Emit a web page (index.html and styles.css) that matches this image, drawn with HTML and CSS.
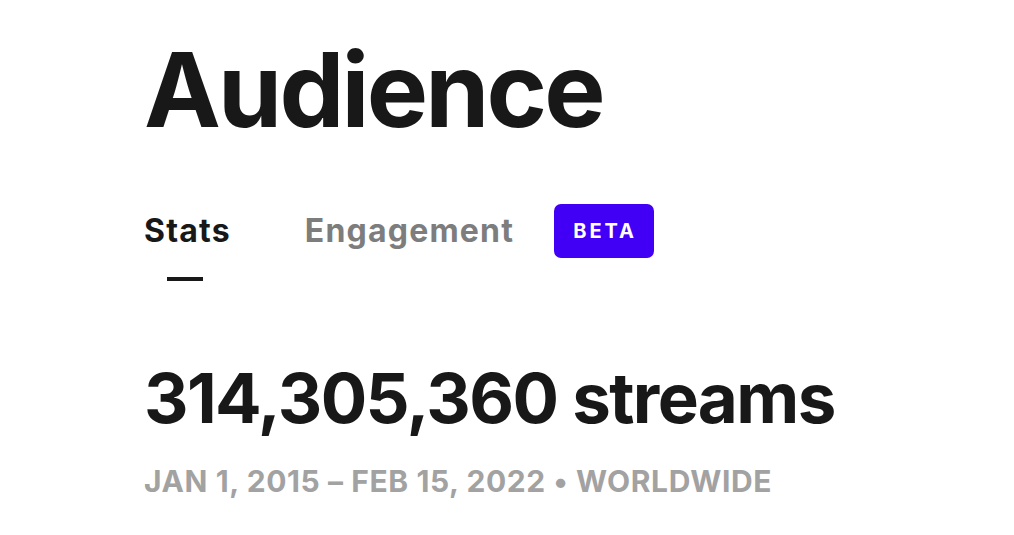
FILE: index.html
```html
<!DOCTYPE html>
<html>
<head>
<meta charset="utf-8">
<link rel="stylesheet" href="styles.css">
</head>
<body>
<main class="page">
  <h1 class="title">Audience</h1>
  <nav class="tabs">
    <div class="tab tab-active">Stats</div>
    <div class="tab">Engagement</div>
    <span class="badge">BETA</span>
  </nav>
  <section class="stats">
    <h2 class="total">314,305,360 streams</h2>
    <p class="meta">JAN 1, 2015 – FEB 15, 2022 • WORLDWIDE</p>
  </section>
</main>
</body>
</html>
```
FILE: styles.css
```css
html, body {
  margin: 0;
  padding: 0;
  background: #ffffff;
}
body {
  font-family: Inter, "Noto Sans", sans-serif;
  color: #181818;
}
.page {
  padding: 30px 0 0 144px;
}
.title {
  margin: 0;
  font-size: 103px;
  font-weight: 700;
  line-height: 120px;
  letter-spacing: -2.8px;
}
.tabs {
  display: flex;
  align-items: flex-start;
  margin-top: 53px;
  height: 90px;
}
.tab {
  position: relative;
  font-size: 32px;
  font-weight: 700;
  line-height: 56px;
  letter-spacing: 1.2px;
  color: #7d7d7d;
}
.tab + .tab {
  margin-left: 74px;
}
.tab-active {
  color: #181818;
}
.tab-active::after {
  content: "";
  position: absolute;
  left: 23px;
  top: 74px;
  width: 36px;
  height: 4px;
  background: #181818;
}
.badge {
  margin-left: 40px;
  margin-top: 1px;
  background: #4100f5;
  color: #ffffff;
  font-size: 20px;
  font-weight: 700;
  letter-spacing: 3px;
  line-height: 54px;
  padding: 0 17px 0 19px;
  border-radius: 7px;
}
.stats {
  margin-top: 65px;
}
.total {
  margin: 0;
  font-size: 69px;
  font-weight: 700;
  line-height: 80px;
  letter-spacing: -1.6px;
}
.meta {
  margin: 25px 0 0;
  font-size: 30px;
  font-weight: 700;
  color: #a2a2a2;
  letter-spacing: 0.6px;
}
```
